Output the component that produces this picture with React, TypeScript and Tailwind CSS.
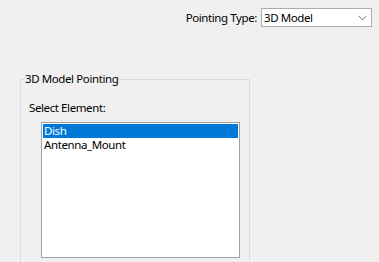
import React from "react";

export default function App() {
  return (
    <div
      className="w-[379px] h-[262px] bg-[#f0f0f0] overflow-hidden text-[11.5px] tracking-[-0.4px] text-black"
      style={{ fontFamily: '"Segoe UI", "Noto Sans", "Open Sans", sans-serif' }}
    >
      <div className="flex justify-end items-center pt-[8px] pr-[7px] gap-[4px]">
        <span className="leading-[16px]">Pointing Type:</span>
        <div className="w-[111px] h-[19px] border border-[#adadad] bg-white flex items-center justify-between pl-[2px] pr-[4px]">
          <span className="leading-[16px]">3D Model</span>
          <svg width="9" height="6" viewBox="0 0 9 6" className="mt-[1px]">
            <path d="M0.5 0.8 L4.5 4.8 L8.5 0.8" fill="none" stroke="#707070" strokeWidth="1" />
          </svg>
        </div>
      </div>
      <fieldset className="ml-[20px] mt-[44px] w-[230px] h-[220px] border border-[#dcdcdc] p-0">
        <legend className="ml-[3px] px-[1px] leading-[16px]">3D Model Pointing</legend>
        <div className="pl-[20px]">
          <div className="-ml-[12px] mt-[13px] leading-[16px]">Select Element:</div>
          <div className="mt-[6px] w-[199px] h-[136px] border border-[#a0a0a0] bg-white pt-[1px] px-[1px]">
            <div className="h-[14px] bg-[#0078d7] text-white leading-[14px] pl-[1px]">Dish</div>
            <div className="h-[14px] leading-[14px] pl-[1px]">Antenna_Mount</div>
          </div>
        </div>
      </fieldset>
    </div>
  );
}
